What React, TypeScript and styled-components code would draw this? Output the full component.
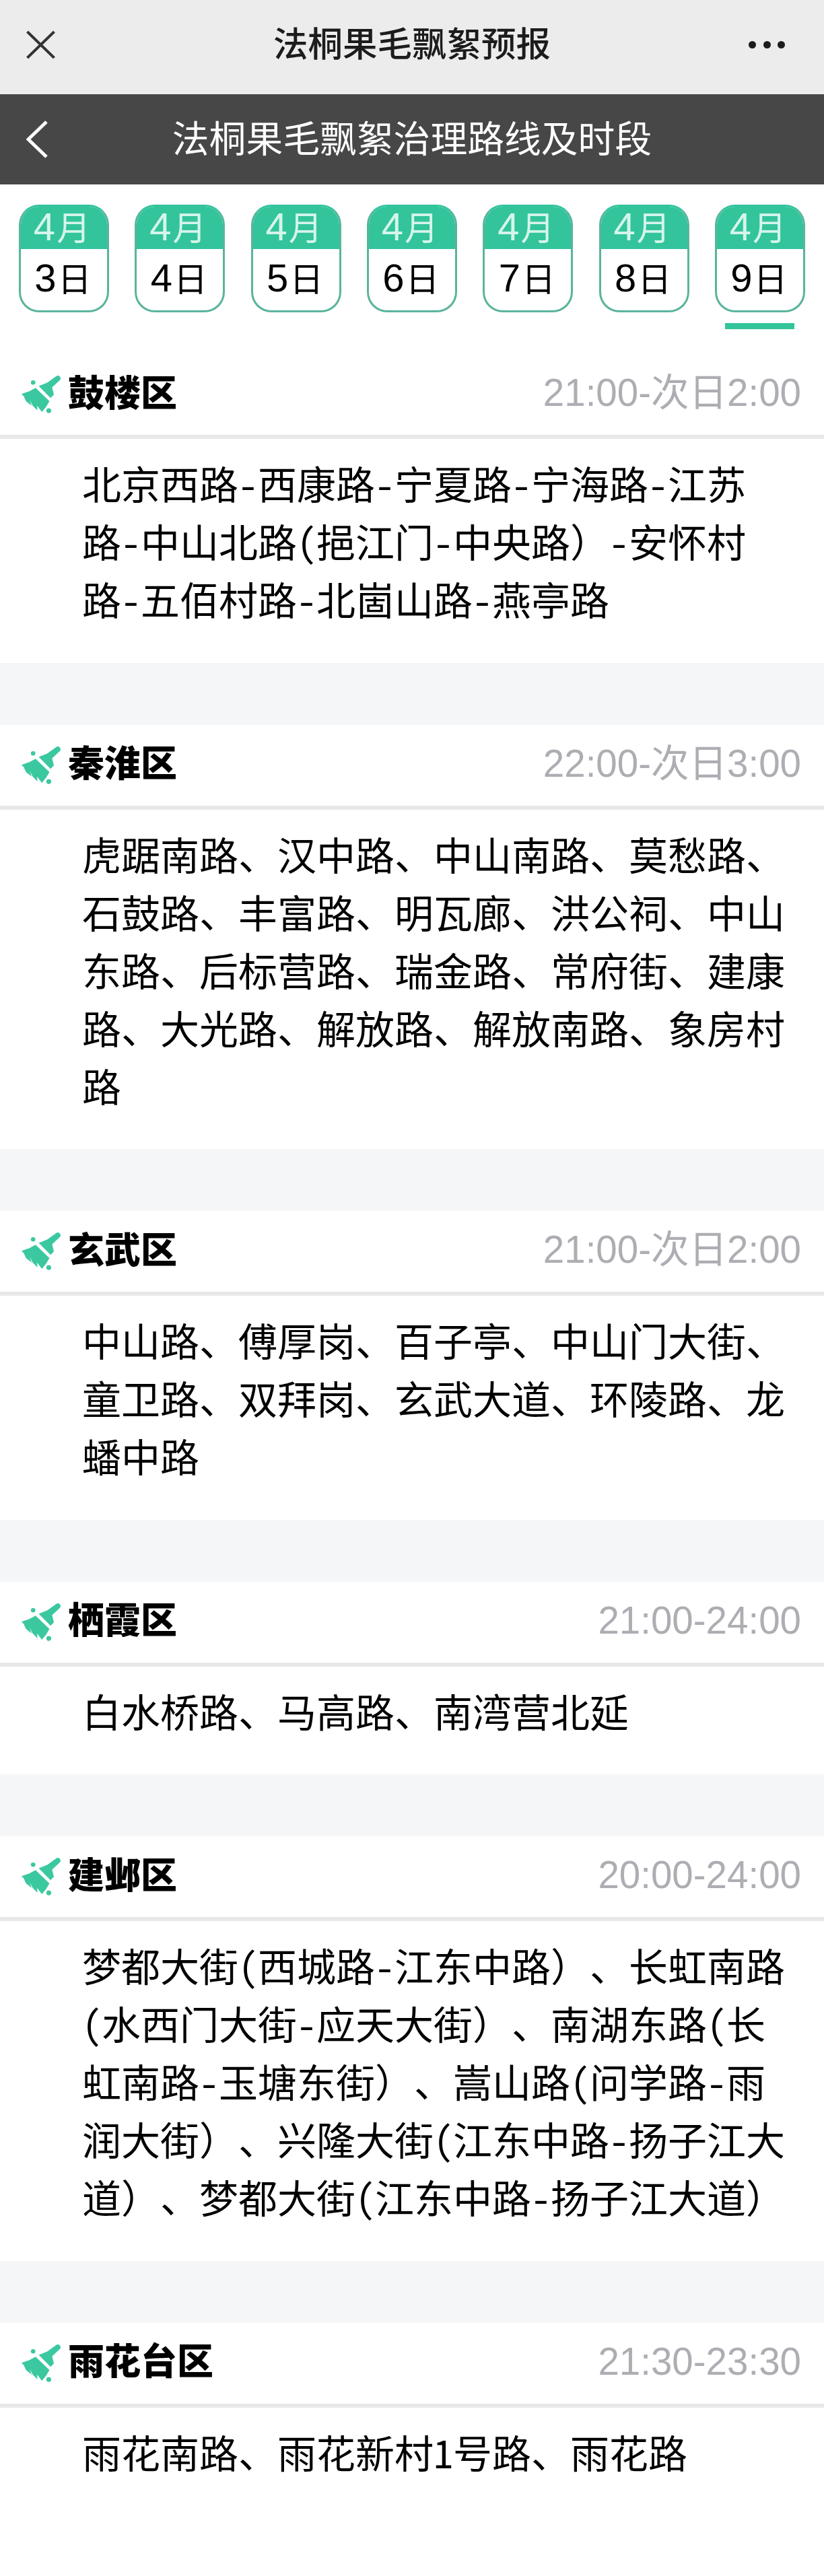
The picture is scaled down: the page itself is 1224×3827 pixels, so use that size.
import React from 'react';
import styled, { createGlobalStyle } from 'styled-components';

const days = [3, 4, 5, 6, 7, 8, 9];

const districts = [
  {
    name: '鼓楼区',
    time: '21:00-次日2:00',
    lines: ['北京西路-西康路-宁夏路-宁海路-江苏', '路-中山北路(挹江门-中央路）-安怀村', '路-五佰村路-北崮山路-燕亭路'],
  },
  {
    name: '秦淮区',
    time: '22:00-次日3:00',
    lines: [
      '虎踞南路、汉中路、中山南路、莫愁路、',
      '石鼓路、丰富路、明瓦廊、洪公祠、中山',
      '东路、后标营路、瑞金路、常府街、建康',
      '路、大光路、解放路、解放南路、象房村',
      '路',
    ],
  },
  {
    name: '玄武区',
    time: '21:00-次日2:00',
    lines: ['中山路、傅厚岗、百子亭、中山门大街、', '童卫路、双拜岗、玄武大道、环陵路、龙', '蟠中路'],
  },
  {
    name: '栖霞区',
    time: '21:00-24:00',
    lines: ['白水桥路、马高路、南湾营北延'],
  },
  {
    name: '建邺区',
    time: '20:00-24:00',
    lines: [
      '梦都大街(西城路-江东中路）、长虹南路',
      '(水西门大街-应天大街）、南湖东路(长',
      '虹南路-玉塘东街）、嵩山路(问学路-雨',
      '润大街）、兴隆大街(江东中路-扬子江大',
      '道）、梦都大街(江东中路-扬子江大道）',
    ],
  },
  {
    name: '雨花台区',
    time: '21:30-23:30',
    lines: ['雨花南路、雨花新村1号路、雨花路'],
  },
];

const BroomIcon = () => (
  <BroomSvg viewBox="15 15 175 178">
    <path d="M92 62 130 47 171 17c6-3 12-2 16 3 4 5 4 11 0 15L152 68l8 32-15 15z" />
    <path d="M78 70 140 130 125 155 106 178 85 150 86 171 65 150 52 125 60 150 35 130 25 108 15 97 50 85z" />
    <circle cx="67" cy="46" r="10" />
    <circle cx="137" cy="172" r="11" />
  </BroomSvg>
);

const App = () => (
  <Page>
    <GlobalStyle />
    <TopBar>
      <CloseIcon viewBox="0 0 43 41">
        <path d="M1.500 1 41.500 40M41.500 1 1.500 40" />
      </CloseIcon>
      <TopTitle>法桐果毛飘絮预报</TopTitle>
      <MoreDots>
        <span />
        <span />
        <span />
      </MoreDots>
    </TopBar>
    <NavBar>
      <BackIcon viewBox="0 0 32 56">
        <path d="M30 2 3 28l27 26" />
      </BackIcon>
      <NavTitle>法桐果毛飘絮治理路线及时段</NavTitle>
    </NavBar>
    <DateTabs>
      {days.map((day) => (
        <DateTab key={day} $active={day === 9}>
          <DateCard>
            <MonthPart>
              <Digit>4</Digit>月
            </MonthPart>
            <DayPart>
              <Digit>{day}</Digit>日
            </DayPart>
          </DateCard>
        </DateTab>
      ))}
    </DateTabs>
    {districts.map((district, index) => (
      <Section key={district.name} $first={index === 0}>
        <SectionHeader>
          <BroomIcon />
          <DistrictName>{district.name}</DistrictName>
          <TimeRange>{district.time}</TimeRange>
        </SectionHeader>
        <RouteList>
          {district.lines.map((line) => (
            <RouteLine key={line}>
              {line.split(/(）)/).map((part, i) => (part === '）' ? <FullBracket key={i}>）</FullBracket> : part))}
            </RouteLine>
          ))}
        </RouteList>
      </Section>
    ))}
  </Page>
);

export default App;

const GlobalStyle = createGlobalStyle`
  html, body {
    margin: 0;
    padding: 0;
    background: #fff;
  }
`;

const Page = styled.div`
  width: 1224px;
  height: 3827px;
  overflow: hidden;
  background: #fff;
  font-family: 'Liberation Sans', 'Noto Sans CJK SC', sans-serif;
`;

const TopBar = styled.header`
  height: 140px;
  padding: 0 39px 8px;
  box-sizing: border-box;
  display: grid;
  grid-template-columns: 1fr auto 1fr;
  align-items: center;
  background: #ececec;
`;

const CloseIcon = styled.svg`
  width: 43px;
  height: 41px;
  fill: none;
  stroke: #333;
  stroke-width: 4;
`;

const TopTitle = styled.div`
  font-size: 51.500px;
  line-height: 60px;
  font-weight: 500;
  color: #1c1c1c;
`;

const MoreDots = styled.div`
  width: 54px;
  margin-right: 19px;
  justify-self: end;
  display: flex;
  justify-content: space-between;

  span {
    width: 11px;
    height: 11px;
    border-radius: 50%;
    background: #1c1c1c;
  }
`;

const NavBar = styled.div`
  height: 134px;
  padding: 0 39px;
  box-sizing: border-box;
  display: grid;
  grid-template-columns: 1fr auto 1fr;
  align-items: center;
  background: #474747;
`;

const BackIcon = styled.svg`
  width: 32px;
  height: 56px;
  fill: none;
  stroke: #fff;
  stroke-width: 5;
`;

const NavTitle = styled.div`
  font-size: 54.800px;
  line-height: 64px;
  color: #fff;
`;

const DateTabs = styled.div`
  height: 252px;
  padding: 30px 28px 0;
  box-sizing: border-box;
  display: flex;
  justify-content: space-between;
`;

const DateTab = styled.div<{ $active: boolean }>`
  width: 134px;
  height: 185px;
  position: relative;

  &::after {
    content: '';
    display: ${({ $active }) => ($active ? 'block' : 'none')};
    position: absolute;
    left: 15px;
    bottom: 0;
    width: 103px;
    height: 9px;
    background: #33c49c;
  }
`;

const DateCard = styled.div`
  height: 160px;
  box-sizing: border-box;
  border: 3px solid #5ab49c;
  border-top-color: #33c49c;
  border-radius: 30px;
  overflow: hidden;
  text-align: center;
`;

const MonthPart = styled.div`
  height: 63px;
  margin: 0 -3px;
  background: #33c49c;
  color: #d5f5ea;
  font-size: 50px;
  line-height: 60px;
  padding-right: 6px;
`;

const DayPart = styled.div`
  height: 91px;
  color: #000;
  font-size: 50px;
  line-height: 86px;
  padding-right: 3px;
`;

const Digit = styled.span`
  font-family: 'Liberation Sans Narrow', 'Liberation Sans', sans-serif;
  font-size: 58px;
  margin-right: 2px;
`;

const Section = styled.section<{ $first: boolean }>`
  margin-top: ${({ $first }) => ($first ? '0' : '92px')};
  background: #fff;
  box-shadow: ${({ $first }) => ($first ? 'none' : '0 -92px 0 #f5f6f8')};
`;

const SectionHeader = styled.div`
  height: 120px;
  padding: 0 34px 0 32px;
  display: flex;
  align-items: center;
  border-bottom: 6px solid #e8e8e8;
`;

const BroomSvg = styled.svg`
  width: 58px;
  height: 59px;
  fill: #3bc8a0;
  flex-shrink: 0;
  margin-top: 3px;
`;

const DistrictName = styled.div`
  margin-left: 11px;
  margin-bottom: 3px;
  font-size: 54px;
  line-height: 60px;
  font-weight: 900;
  color: #000;
`;

const TimeRange = styled.div`
  margin-left: auto;
  margin-bottom: 4px;
  font-size: 56.500px;
  line-height: 60px;
  color: #adaeb3;
`;

const RouteList = styled.div`
  padding: 22px 0 52.500px 122px;
`;

const RouteLine = styled.div`
  font-family: 'Noto Sans CJK SC', sans-serif;
  font-feature-settings: 'hwid';
  text-spacing-trim: space-all;
  font-size: 58px;
  line-height: 86px;
  color: #000;
  white-space: nowrap;
`;

const FullBracket = styled.span`
  font-feature-settings: normal;
`;
